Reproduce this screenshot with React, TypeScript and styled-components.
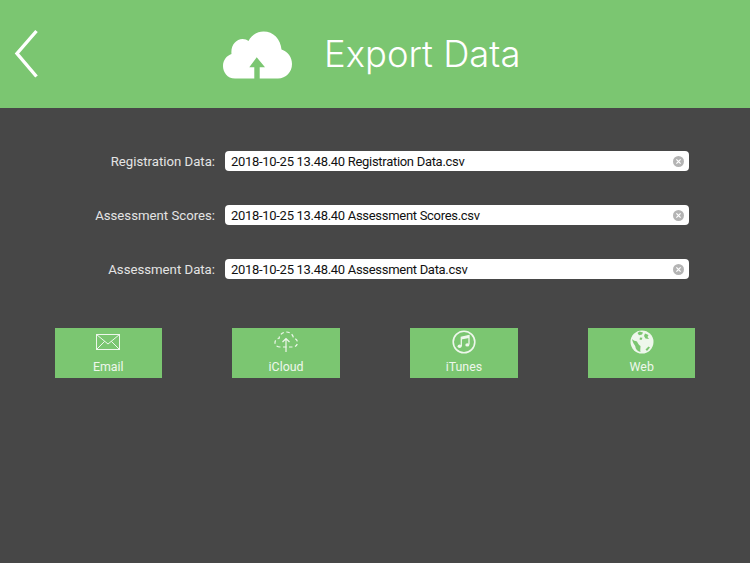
import React from 'react'
import styled, { createGlobalStyle } from 'styled-components'

const GlobalStyle = createGlobalStyle`
  html, body {
    margin: 0;
    padding: 0;
    background: #474747;
    font-family: Roboto, "Liberation Sans", sans-serif;
  }
`

const Page = styled.div`
  width: 750px;
  height: 563px;
  overflow: hidden;
  background: #474747;
`

const Header = styled.header`
  height: 108px;
  background: #7bc671;
  display: flex;
  align-items: center;
  padding-left: 14px;
`

const BackButton = styled.div`
  width: 26px;
  height: 52px;
  display: flex;
  margin-right: 182px;
  margin-top: -1px;
`

const HeaderIcon = styled.div`
  width: 72px;
  height: 48px;
  display: flex;
  margin-right: 30px;
  margin-top: 2px;
`

const Title = styled.h1`
  margin: 0;
  color: #fff;
  font-family: Inter, "Liberation Sans", sans-serif;
  font-size: 36.4px;
  font-weight: 300;
  line-height: 44px;
`

const Form = styled.div`
  display: flex;
  flex-direction: column;
  gap: 34px;
  padding: 43px 0 0 0;
`

const Row = styled.div`
  display: flex;
  align-items: center;
  height: 20px;
`

const Label = styled.label`
  width: 215px;
  text-align: right;
  color: #e4e4e4;
  font-size: 13.2px;
  margin-right: 10px;
`

const Field = styled.div`
  width: 464px;
  height: 20px;
  box-sizing: border-box;
  background: #fff;
  border-radius: 4px;
  display: flex;
  align-items: center;
  justify-content: space-between;
  padding: 0 5px 0 6px;
  color: #111;
  font-size: 13px;
  letter-spacing: -0.3px;
`

const ClearIcon = styled.div`
  width: 11px;
  height: 11px;
  display: flex;
`

const Actions = styled.div`
  display: grid;
  grid-template-columns: repeat(4, 107.5px);
  justify-content: space-between;
  width: 641px;
  margin: 49px 0 0 54.5px;
`

const ActionButton = styled.button`
  height: 50px;
  border: 0;
  padding: 1px 0 0;
  background: #7bc671;
  color: #eef7ec;
  font-family: inherit;
  font-size: 12.4px;
  display: flex;
  flex-direction: column;
  align-items: center;
`

const ActionIcon = styled.div`
  height: 26px;
  display: flex;
  align-items: center;
  justify-content: center;
  margin-bottom: 4px;
`

const ink = '#eef7ec'

const Chevron = () => (
  <svg width="26" height="52" viewBox="0 0 26 52" fill="none">
    <path d="M22.5 3 L3 25.5 L22.5 48.5" stroke="#fff" strokeWidth="3.4" />
  </svg>
)

const CloudUpload = () => (
  <svg width="72" height="48" viewBox="0 0 72 48">
    <path
      fill="#fff"
      d="M13 47.5 C5 47.5 1 41 1 35 C1 29 5 24.5 9.5 23 C8.5 14.5 14 8 20.5 8 C23 8 25 8.8 26.5 10 C29.5 4 35 0.5 41.5 0.5 C51.5 0.5 58.5 8 59.5 18.5 C66 20.5 70 26.5 70 33 C70 41 64 47.5 56 47.5 Z"
    />
    <path
      fill="#7bc671"
      d="M34.7 26.3 L43 36.3 L37.7 36.3 L37.7 48 L32.3 48 L32.3 36.3 L27.3 36.3 Z"
    />
  </svg>
)

const ClearGlyph = () => (
  <svg width="11" height="11" viewBox="0 0 11 11">
    <circle cx="5.5" cy="5.5" r="5.5" fill="#b4b4b4" />
    <path d="M3.4 3.4 L7.6 7.6 M7.6 3.4 L3.4 7.6" stroke="#fff" strokeWidth="1.2" />
  </svg>
)

const MailIcon = () => (
  <svg width="24" height="16" viewBox="0 0 24 16" fill="none" stroke={ink} strokeWidth="1">
    <rect x="0.5" y="0.5" width="23" height="15" />
    <path d="M0.5 0.5 L12 10 L23.5 0.5 M0.5 15.5 L8.7 7.3 M23.5 15.5 L15.3 7.3" />
  </svg>
)

const DashedCloud = () => (
  <svg width="24" height="22" viewBox="0 0 24 22" fill="none" stroke={ink} strokeWidth="1.2">
    <path
      strokeDasharray="3.5 2.5"
      d="M6 16 C2.5 16 1 13.5 1 11.5 C1 9 3 7.5 5 7.5 C5.5 3.5 9 1 12.5 1 C16.5 1 19 4 19.5 7 C22 7.5 23.5 9.5 23.5 11.5 C23.5 14 21.5 16 19 16 H6"
    />
    <path d="M12 21 V7.5 M8.5 11 L12 7.5 L15.5 11" />
  </svg>
)

const MusicIcon = () => (
  <svg width="24" height="24" viewBox="0 0 24 24" fill="none">
    <circle cx="12" cy="12" r="10.8" stroke={ink} strokeWidth="1.6" />
    <path d="M9.3 16 V7.2 L17 5.6 V14.6" stroke={ink} strokeWidth="1.3" />
    <path d="M9.3 7.2 L17 5.6 V8 L9.3 9.6 Z" fill={ink} />
    <ellipse cx="7.6" cy="16.3" rx="2" ry="1.7" fill={ink} />
    <ellipse cx="15.3" cy="14.9" rx="2" ry="1.7" fill={ink} />
  </svg>
)

const GlobeIcon = () => (
  <svg width="24" height="24" viewBox="0 0 24 24">
    <circle cx="12" cy="12" r="11.5" fill={ink} />
    <path
      fill="#7bc671"
      d="M2 9 C3.5 10.5 5 11 7 11.5 C8 13.5 9 15 10.5 16 C10.5 18.5 10 20.5 10.5 22 C7.5 21.5 5.5 19 5.2 16 C4 14 2.5 12 2 9 Z M9.5 1.6 L13 2.6 L12 4.6 L9 5.2 L7.5 3 Z M15 3.5 L18.5 5 L17.5 7 L19 9 L15.5 8.5 L14 6 Z M10 7.5 L12.5 7.8 L11.5 10 L9.5 9.5 Z M15.5 19.5 L18.5 16.5 L20 17.5 L17 21 Z"
    />
  </svg>
)

const rows = [
  { label: 'Registration Data:', file: '2018-10-25 13.48.40 Registration Data.csv' },
  { label: 'Assessment Scores:', file: '2018-10-25 13.48.40 Assessment Scores.csv' },
  { label: 'Assessment Data:', file: '2018-10-25 13.48.40 Assessment Data.csv' },
]

const actions = [
  { label: 'Email', icon: <MailIcon /> },
  { label: 'iCloud', icon: <DashedCloud /> },
  { label: 'iTunes', icon: <MusicIcon /> },
  { label: 'Web', icon: <GlobeIcon /> },
]

export default function App() {
  return (
    <Page>
      <GlobalStyle />
      <Header>
        <BackButton>
          <Chevron />
        </BackButton>
        <HeaderIcon>
          <CloudUpload />
        </HeaderIcon>
        <Title>Export Data</Title>
      </Header>
      <Form>
        {rows.map((row) => (
          <Row key={row.label}>
            <Label>{row.label}</Label>
            <Field>
              {row.file}
              <ClearIcon>
                <ClearGlyph />
              </ClearIcon>
            </Field>
          </Row>
        ))}
      </Form>
      <Actions>
        {actions.map((action) => (
          <ActionButton key={action.label}>
            <ActionIcon>{action.icon}</ActionIcon>
            {action.label}
          </ActionButton>
        ))}
      </Actions>
    </Page>
  )
}
